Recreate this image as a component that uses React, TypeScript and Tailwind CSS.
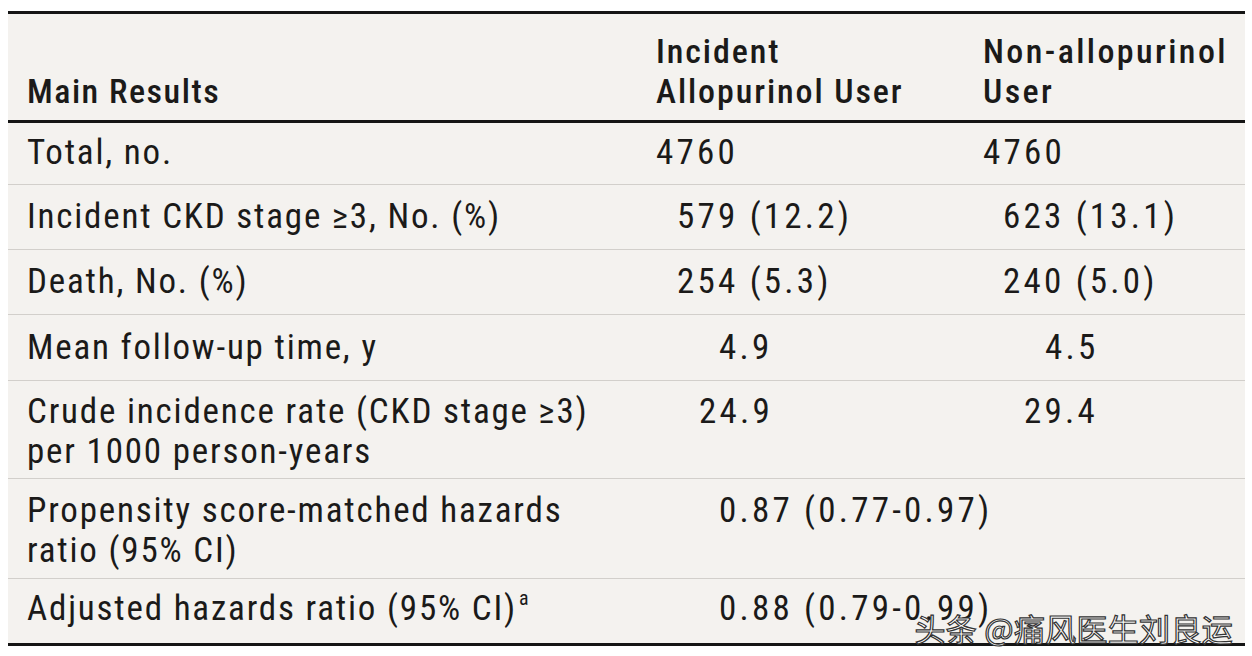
import React from "react";

type Row = {
  label: React.ReactNode;
  a?: string;
  aPad?: string;
  b?: string;
  bPad?: string;
  span?: string;
  pad: string;
};

const rows: Row[] = [
  { label: "Total, no.", a: "4760", aPad: "pl-0", b: "4760", bPad: "pl-0", pad: "pt-[10px] pb-[11px]" },
  { label: "Incident CKD stage ≥3, No. (%)", a: "579 (12.2)", aPad: "pl-[21px]", b: "623 (13.1)", bPad: "pl-[20px]", pad: "pt-[12px] pb-[12px]" },
  { label: "Death, No. (%)", a: "254 (5.3)", aPad: "pl-[21px]", b: "240 (5.0)", bPad: "pl-[20px]", pad: "pt-[12px] pb-[12px]" },
  { label: "Mean follow-up time, y", a: "4.9", aPad: "pl-[63px]", b: "4.5", bPad: "pl-[62px]", pad: "pt-[13px] pb-[12px]" },
  {
    label: (
      <>
        Crude incidence rate (CKD stage ≥3)
        <br />
        per 1000 person-years
      </>
    ),
    a: "24.9",
    aPad: "pl-[43px]",
    b: "29.4",
    bPad: "pl-[41px]",
    pad: "pt-[11px] pb-[6px]",
  },
  {
    label: (
      <>
        Propensity score-matched hazards
        <br />
        ratio (95% CI)
      </>
    ),
    span: "0.87 (0.77-0.97)",
    pad: "pt-[12px] pb-[7px]",
  },
  {
    label: (
      <>
        Adjusted hazards ratio (95% CI)
        <span className="relative -top-[15px] ml-[2px] text-[20px] leading-none">a</span>
      </>
    ),
    span: "0.88 (0.79-0.99)",
    pad: "pt-[10px] pb-[14px]",
  },
];

export default function App() {
  return (
    <div className="min-h-[656px] w-[1252px] bg-white pt-[11px] pl-[8px] font-['Roboto_Condensed','Roboto',sans-serif] text-[#1b1a19]">
      <div className="relative w-[1237px] bg-[#f4f2ef] text-[35px] leading-[40px] tracking-[1.8px]">
        <div className="grid grid-cols-[648px_327px_1fr] border-t-[3px] border-b-[3px] border-[#151515] pt-[17px] pb-[9px] text-[34px] font-medium tracking-[1.9px]">
          <div className="self-end pl-[19px] tracking-[1.5px]">Main Results</div>
          <div>
            Incident
            <br />
            Allopurinol User
          </div>
          <div className="tracking-[2.4px]">
            Non-allopurinol
            <br />
            User
          </div>
        </div>
        {rows.map((r, i) => (
          <div
            key={i}
            className={`grid grid-cols-[648px_327px_1fr] ${r.pad} ${
              i === rows.length - 1 ? "border-b-[3px] border-[#151515]" : "border-b border-[#d2cfcb]"
            }`}
          >
            <div className="pl-[19px]">{r.label}</div>
            {r.span ? (
              <div className="col-span-2 pl-[63px] tracking-[3.2px]">{r.span}</div>
            ) : (
              <>
                <div className={`${r.aPad} tracking-[3.2px]`}>{r.a}</div>
                <div className={`${r.bPad} tracking-[3.2px]`}>{r.b}</div>
              </>
            )}
          </div>
        ))}
        <div className="absolute top-[597px] right-[12px] font-['Noto_Sans_CJK_SC',sans-serif] text-[31px] leading-[40px] tracking-[0.3px] text-white [-webkit-text-stroke:1.2px_#333]">
          头条 @痛风医生刘良运
        </div>
      </div>
    </div>
  );
}
